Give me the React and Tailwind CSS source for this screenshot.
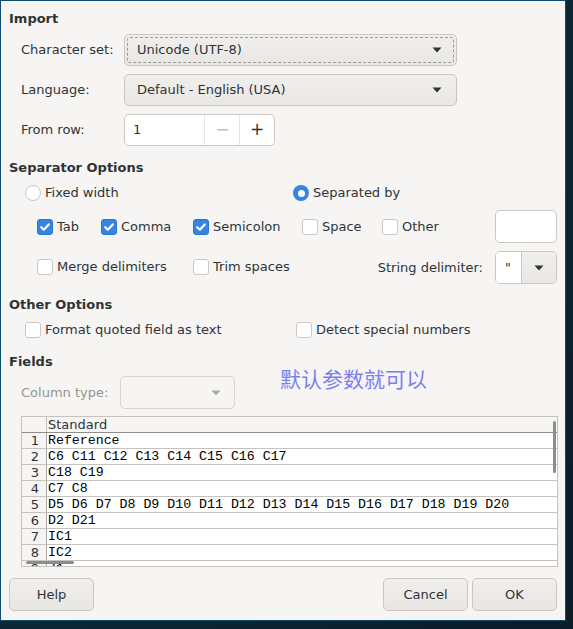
import React from "react";

const font = { fontFamily: '"DejaVu Sans", "Liberation Sans", sans-serif' };

function Check() {
  return (
    <svg width="12" height="12" viewBox="0 0 12 12">
      <path d="M2.2 6.2 L4.8 8.7 L9.8 3.4" fill="none" stroke="white" strokeWidth="2.2" strokeLinecap="round" strokeLinejoin="round" />
    </svg>
  );
}

function CheckBox({ checked, label }) {
  return (
    <div className="flex items-center gap-[4px]">
      {checked ? (
        <div className="w-[16px] h-[16px] rounded-[3px] bg-[#3584e4] border border-[#2a75d2] flex items-center justify-center">
          <Check />
        </div>
      ) : (
        <div className="w-[16px] h-[16px] rounded-[3px] bg-white border border-[#cdc7c2]" />
      )}
      <span className="text-[13px] text-[#2e3436] whitespace-nowrap">{label}</span>
    </div>
  );
}

function Radio({ checked, label }) {
  return (
    <div className="flex items-center gap-[4px]">
      {checked ? (
        <div className="w-[16px] h-[16px] rounded-full bg-[#3584e4] flex items-center justify-center">
          <div className="w-[7px] h-[7px] rounded-full bg-white" />
        </div>
      ) : (
        <div className="w-[16px] h-[16px] rounded-full bg-white border border-[#cdc7c2]" />
      )}
      <span className="text-[13px] text-[#2e3436] whitespace-nowrap">{label}</span>
    </div>
  );
}

function Arrow({ color = "#2e3436" }) {
  return (
    <svg width="10" height="6" viewBox="0 0 10 6">
      <path d="M0.5 0.5 L9.5 0.5 L5 5.5 Z" fill={color} />
    </svg>
  );
}

function Heading({ children, className = "" }) {
  return (
    <div className={"h-[20px] flex items-center pl-[8px] text-[13px] font-bold text-[#2e3436] " + className}>
      {children}
    </div>
  );
}

function Combo({ text, focus }) {
  return (
    <div className="w-[333px] h-[32px] rounded-[5px] border border-[#cdc7c2] bg-gradient-to-b from-[#f0efed] to-[#e9e7e4] p-[2px]">
      <div
        className={
          "h-full rounded-[3px] flex items-center justify-between pl-[9px] pr-[11px] " +
          (focus ? "border border-dashed border-[#9a9996]" : "border border-transparent")
        }
      >
        <span className="text-[13px] text-[#2e3436]">{text}</span>
        <Arrow />
      </div>
    </div>
  );
}

const rows = [
  "Reference",
  "C6 C11 C12 C13 C14 C15 C16 C17",
  "C18 C19",
  "C7 C8",
  "D5 D6 D7 D8 D9 D10 D11 D12 D13 D14 D15 D16 D17 D18 D19 D20",
  "D2 D21",
  "IC1",
  "IC2",
  "J1",
];

export default function App() {
  return (
    <div className="w-[573px] h-[629px] bg-gradient-to-br from-[#123547] via-[#0d2735] to-[#0a1c27] overflow-hidden" style={font}>
      <div className="w-[566px] h-[621px] bg-[#f6f5f4] border border-[#0d4d6b] flex flex-col">
        <Heading className="mt-[8px]">Import</Heading>

        <div className="mt-[5px] h-[32px] flex items-center">
          <div className="w-[123px] pl-[20px] text-[13px] text-[#2e3436]">Character set:</div>
          <Combo text="Unicode (UTF-8)" focus />
        </div>
        <div className="mt-[8px] h-[32px] flex items-center">
          <div className="w-[123px] pl-[20px] text-[13px] text-[#2e3436]">Language:</div>
          <Combo text="Default - English (USA)" />
        </div>
        <div className="mt-[8px] h-[32px] flex items-center">
          <div className="w-[123px] pl-[20px] text-[13px] text-[#2e3436]">From row:</div>
          <div className="w-[151px] h-[32px] rounded-[5px] border border-[#cdc7c2] bg-white flex">
            <div className="w-[80px] flex items-center pl-[8px] text-[13px] text-[#2e3436]">1</div>
            <div className="w-[35px] border-l border-[#e6e3e0] flex items-center justify-center text-[17px] text-[#c0bfbc]">−</div>
            <div className="w-[35px] border-l border-[#e6e3e0] flex items-center justify-center text-[17px] text-[#2e3436]">+</div>
          </div>
        </div>

        <Heading className="mt-[12px]">Separator Options</Heading>

        <div className="mt-[5px] h-[20px] flex items-center pl-[24px]">
          <div className="w-[268px]">
            <Radio label="Fixed width" />
          </div>
          <Radio checked label="Separated by" />
        </div>

        <div className="mt-[7px] h-[33px] flex items-center pl-[36px] pr-[8px]">
          <div className="w-[64px]"><CheckBox checked label="Tab" /></div>
          <div className="w-[92px]"><CheckBox checked label="Comma" /></div>
          <div className="w-[109px]"><CheckBox checked label="Semicolon" /></div>
          <div className="w-[80px]"><CheckBox label="Space" /></div>
          <div><CheckBox label="Other" /></div>
          <div className="ml-auto w-[62px] h-[33px] rounded-[5px] border border-[#cdc7c2] bg-white" />
        </div>

        <div className="mt-[8px] h-[33px] flex items-center pl-[36px] pr-[8px]">
          <div className="w-[156px] -mt-[2px]"><CheckBox label="Merge delimiters" /></div>
          <div className="-mt-[2px]"><CheckBox label="Trim spaces" /></div>
          <div className="ml-auto mr-[12px] text-[13px] text-[#2e3436]">String delimiter:</div>
          <div className="w-[62px] h-[33px] rounded-[5px] border border-[#cdc7c2] flex overflow-hidden">
            <div className="w-[25px] bg-white flex items-center pl-[9px] text-[13px] text-[#2e3436]">"</div>
            <div className="flex-1 border-l border-[#cdc7c2] bg-gradient-to-b from-[#f0efed] to-[#e9e7e4] flex items-center justify-center">
              <Arrow />
            </div>
          </div>
        </div>

        <Heading className="mt-[11px]">Other Options</Heading>

        <div className="mt-[5px] h-[20px] flex items-center pl-[24px]">
          <div className="w-[271px]"><CheckBox label="Format quoted field as text" /></div>
          <CheckBox label="Detect special numbers" />
        </div>

        <Heading className="mt-[12px]">Fields</Heading>

        <div className="relative mt-[4px] h-[33px] flex items-center">
          <div className="w-[119px] pl-[20px] text-[13px] text-[#929595]">Column type:</div>
          <div className="w-[115px] h-[33px] rounded-[5px] border border-[#d8d4d0] bg-[#f6f5f4] flex items-center justify-end pr-[13px]">
            <Arrow color="#a9aaa8" />
          </div>
          <div
            className="absolute left-[279px] top-[-11px] text-[21px] text-[#7d7ff0] leading-[26px]"
            style={{ fontFamily: '"Noto Sans CJK SC", sans-serif' }}
          >
            默认参数就可以
          </div>
        </div>

        <div className="mt-[7px] ml-[20px] w-[537px] h-[151px] border border-[#c6c2bd] bg-white relative overflow-hidden">
          <div className="h-[16px] flex border-b border-[#8f8e8c] bg-[#f6f5f4]">
            <div className="w-[25px] border-r border-[#c6c2bd]" />
            <div className="pl-[1px] text-[13px] leading-[15px] text-[#2e3436]">Standard</div>
          </div>
          {rows.map((r, i) => (
            <div key={i} className="h-[16px] flex border-b border-[#c6c2bd]">
              <div className="w-[25px] shrink-0 border-r border-[#a7a5a2] bg-[#f6f5f4] text-[13px] leading-[15px] text-[#2e3436] text-center pl-[2px]">
                {i + 1}
              </div>
              <div
                className="pl-[1px] text-[13.25px] leading-[15px] text-black whitespace-pre"
                style={{ fontFamily: '"Liberation Mono", monospace' }}
              >
                {r}
              </div>
            </div>
          ))}
          <div className="absolute right-[1px] top-[4px] w-[3px] h-[52px] rounded-full bg-[#8b8e8f]" />
          <div className="absolute left-[4px] bottom-[2px] w-[48px] h-[3px] rounded-full bg-[#8b8e8f]" />
        </div>

        <div className="mt-[11px] h-[33px] flex pl-[8px] pr-[8px]">
          <button className="w-[85px] h-[33px] rounded-[5px] border border-[#cdc7c2] bg-gradient-to-b from-[#f0efed] to-[#e8e6e3] text-[13px] text-[#2e3436]">Help</button>
          <button className="ml-auto w-[85px] h-[33px] rounded-[5px] border border-[#cdc7c2] bg-gradient-to-b from-[#f0efed] to-[#e8e6e3] text-[13px] text-[#2e3436]">Cancel</button>
          <button className="ml-[4px] w-[85px] h-[33px] rounded-[5px] border border-[#cdc7c2] bg-gradient-to-b from-[#f0efed] to-[#e8e6e3] text-[13px] text-[#2e3436]">OK</button>
        </div>
      </div>
    </div>
  );
}
